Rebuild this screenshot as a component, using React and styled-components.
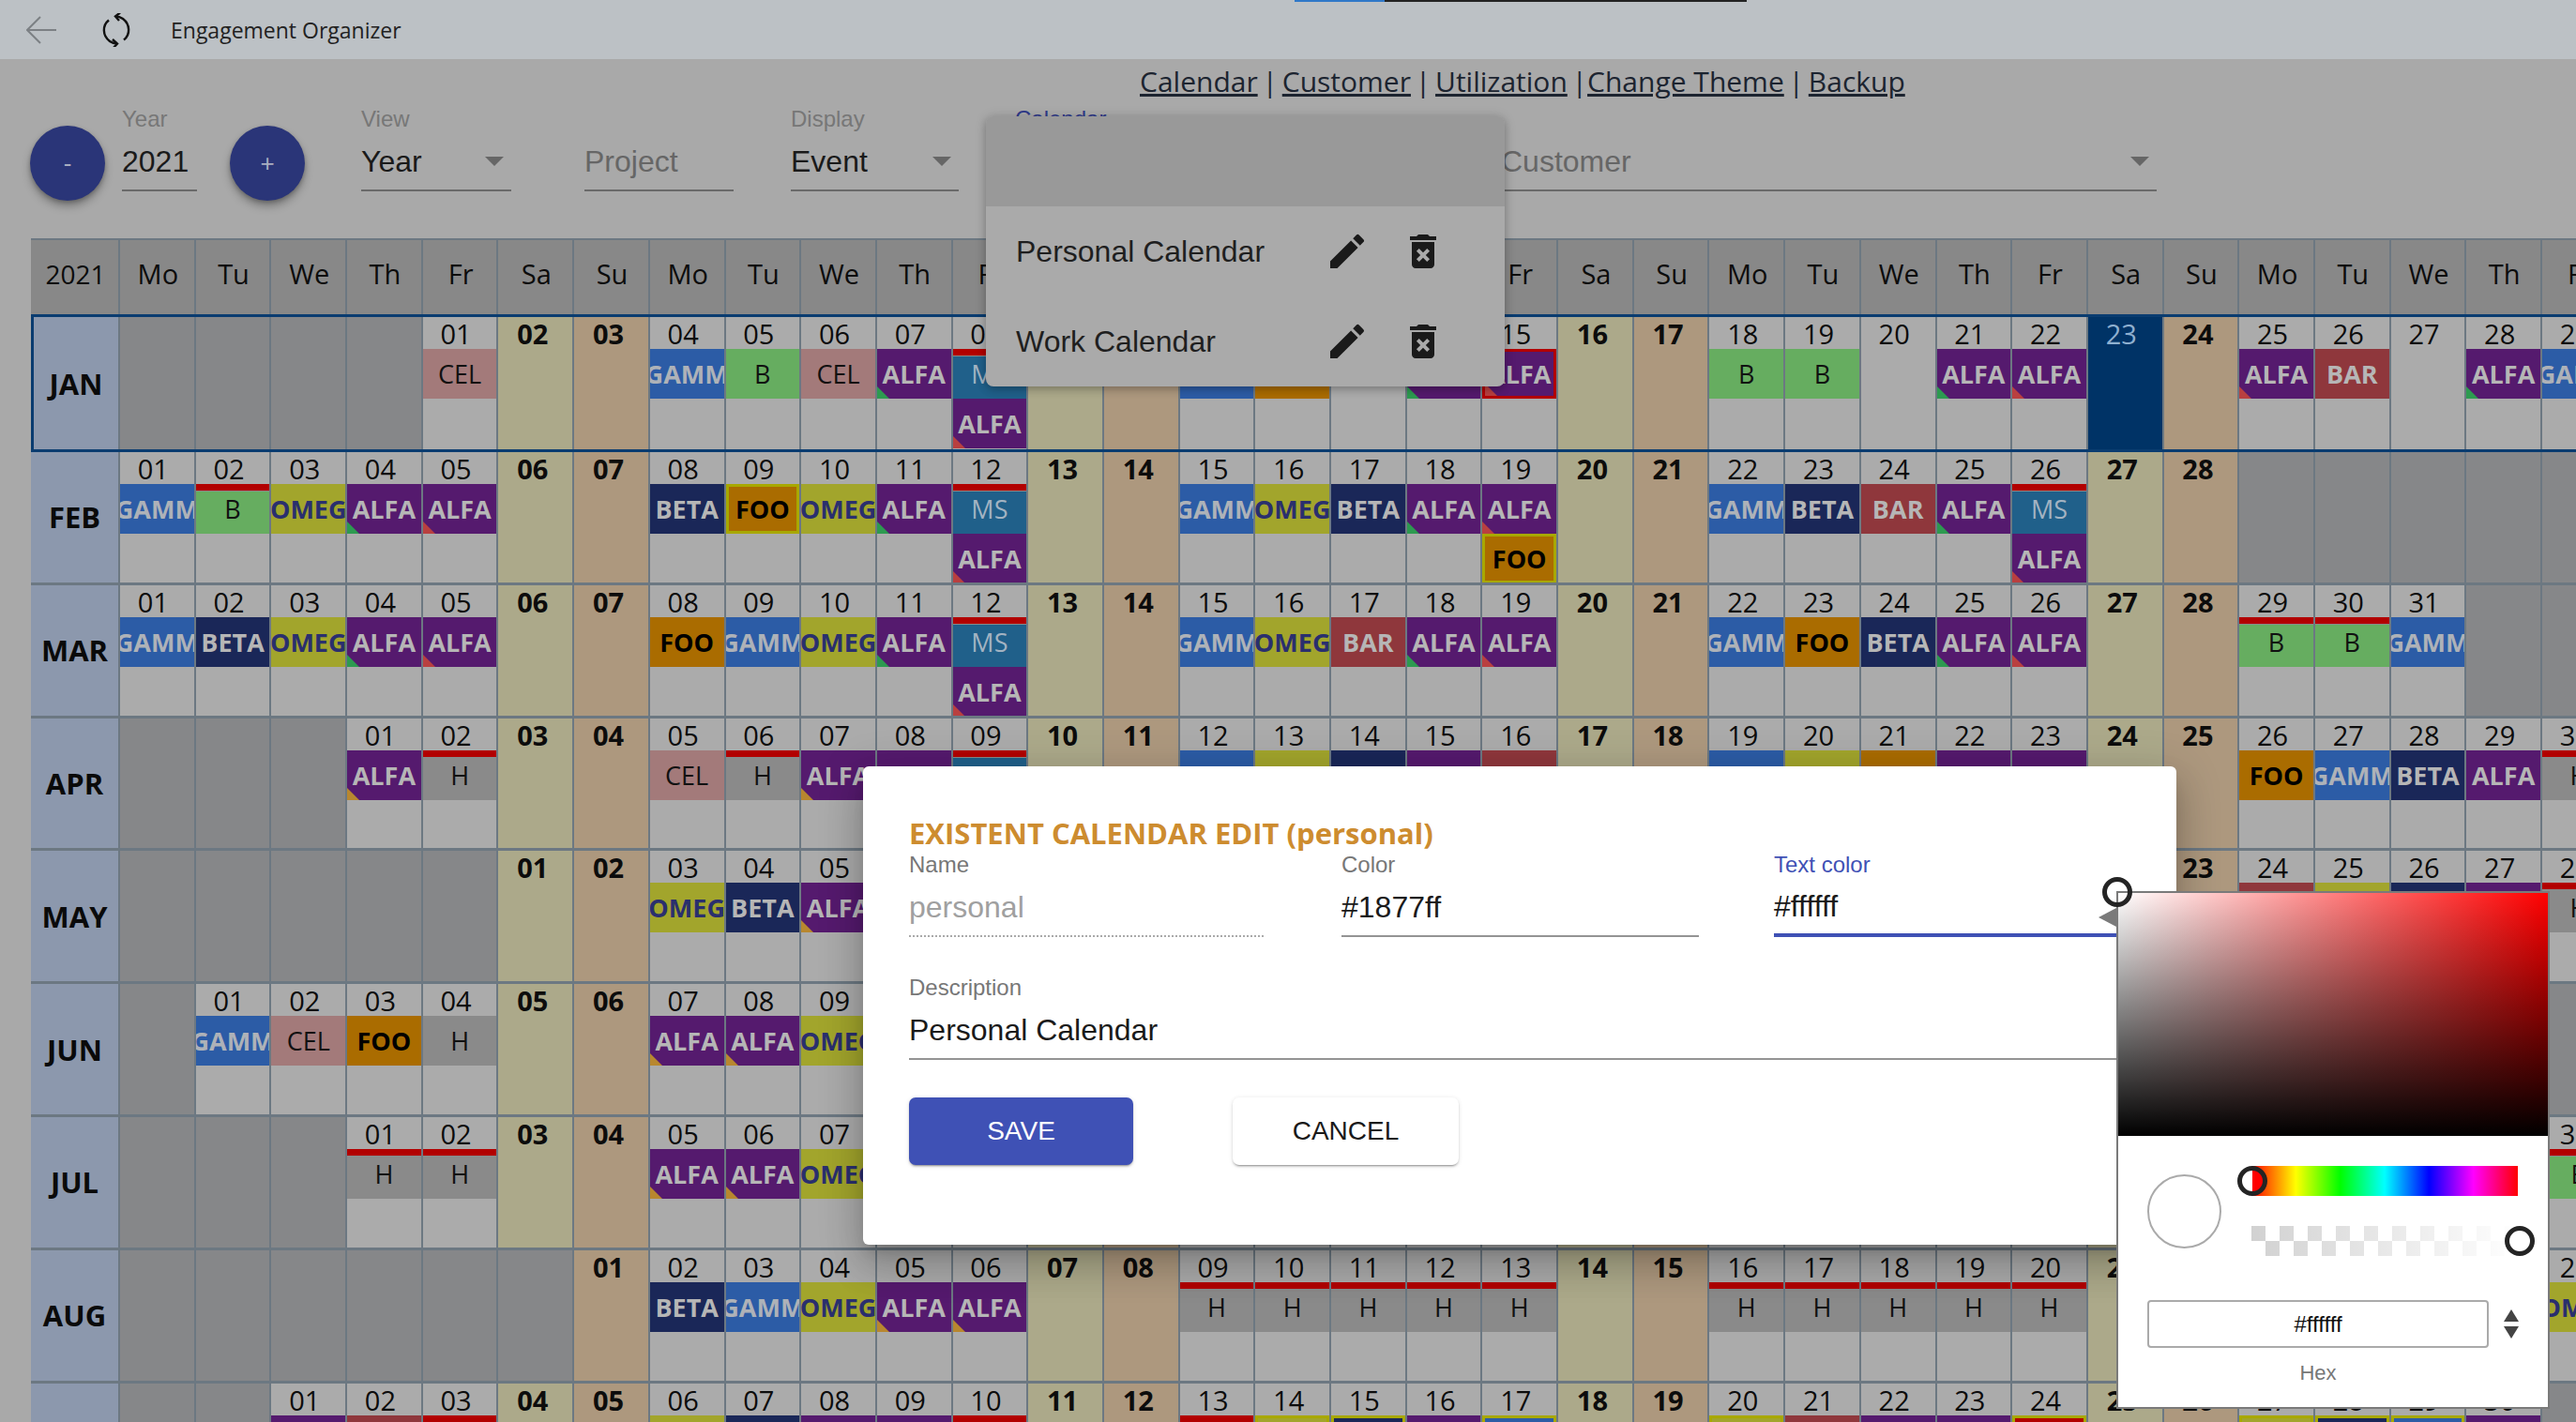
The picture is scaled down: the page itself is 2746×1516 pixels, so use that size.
import React from "react";
import styled, { createGlobalStyle } from "styled-components";
import { MdEdit, MdDeleteForever } from "react-icons/md";

const GlobalStyle = createGlobalStyle`
  html, body {
    margin: 0;
    padding: 0;
    overflow: hidden;
    background: #a9a9a9;
  }
  * {
    box-sizing: border-box;
  }
`;

const UI = `"Liberation Sans", Arial, sans-serif`;
const CAL = `"Open Sans", "Liberation Sans", sans-serif`;
const LINE = "#6c7882";

const Page = styled.div`
  position: relative;
  width: 2746px;
  height: 1516px;
  overflow: hidden;
  background: #a9a9a9;
  font-family: ${UI};
`;

const TitleBar = styled.header`
  position: relative;
  height: 63px;
  display: flex;
  align-items: center;
  padding-left: 28px;
  background: #bcc1c5;
`;

const Progress = styled.div`
  position: absolute;
  top: 0;
  left: 1380px;
  width: 482px;
  height: 2px;
  background: linear-gradient(to right, #2f78c8 96px, #222 96px);
`;

const AppName = styled.span`
  margin-left: 42px;
  font: 400 23px ${CAL};
  color: #222;
`;

const SyncIcon = styled.svg`
  margin-left: 48px;
`;

const Nav = styled.nav`
  height: 49px;
  padding: 0 0 2px 1215px;
  display: flex;
  align-items: center;
  font: 400 30px ${CAL};
  word-spacing: -3px;
  color: #1c2430;
  white-space: pre;
`;

const NavLink = styled.a`
  color: #1c2430;
  word-spacing: 0;
  text-decoration: underline;
`;

const Toolbar = styled.section`
  height: 142px;
  padding-left: 32px;
  display: flex;
  align-items: flex-start;
`;

const RoundButton = styled.button`
  width: 80px;
  height: 80px;
  margin-top: 22px;
  margin-left: ${(p) => p.$ml || 0}px;
  border: 0;
  border-radius: 50%;
  background: #2a3578;
  color: #a9adc0;
  font: 400 26px ${UI};
  box-shadow: 0 6px 10px rgba(0, 0, 0, 0.28), 0 2px 4px rgba(0, 0, 0, 0.2);
`;

const Field = styled.div`
  position: relative;
  flex: ${(p) => (p.$w ? "none" : "1")};
  width: ${(p) => (p.$w ? `${p.$w}px` : "auto")};
  margin-left: ${(p) => p.$ml || 0}px;

  ${(p) =>
    p.$arrow &&
    `&::after {
      content: "";
      position: absolute;
      right: 8px;
      top: 55px;
      border-left: 10px solid transparent;
      border-right: 10px solid transparent;
      border-top: 10px solid #666;
    }`}
`;

const Label = styled.label`
  display: block;
  height: 30px;
  font: 400 24px/30px ${UI};
  color: ${(p) => p.$color || "#777"};
`;

const Value = styled.div`
  height: 62px;
  display: flex;
  align-items: center;
  font: 400 32px ${UI};
  color: ${(p) => p.$color || "#1a1a1a"};
  border-bottom: ${(p) => p.$line || "2px solid #6a6a6a"};
`;

const Grid = styled.div`
  display: flex;
  flex-direction: column;
  width: max-content;
  margin-left: 33px;
`;

const Row = styled.div`
  display: grid;
  grid-template-columns: ${(p) => (p.$edge ? 92 : 95)}px repeat(37, 80.7px);
  height: ${(p) => p.$h}px;
  border-bottom: 3px solid ${(p) => p.$edge || LINE};
  border-top: ${(p) => (p.$edge ? `3px solid ${p.$edge}` : "0")};
  border-left: ${(p) => (p.$edge ? `3px solid ${p.$edge}` : "0")};
`;

const HeadRow = styled.div`
  display: grid;
  grid-template-columns: 95px repeat(37, 80.7px);
  height: 81px;
  border-top: 2px solid ${LINE};
`;

const HeadCell = styled.div`
  display: flex;
  align-items: center;
  justify-content: center;
  padding: 0 0 8px 2px;
  background: #888888;
  border-right: 2px solid ${LINE};
  font: 400 ${(p) => p.$size || 29}px ${CAL};
  color: #0c0c0c;
`;

const Month = styled.div`
  display: flex;
  align-items: center;
  justify-content: center;
  background: #8c98ad;
  border-right: 2px solid ${LINE};
  font: 700 31px ${CAL};
  color: #0a0a0a;
`;

const tints = {
  day: "#ababab",
  off: "#868789",
  sat: "#aca98a",
  sun: "#ad987e",
  today: "#003366",
};

const Cell = styled.div`
  min-width: 0;
  overflow: hidden;
  display: flex;
  flex-direction: column;
  background: ${(p) => tints[p.$kind]};
  border-right: 2px solid ${LINE};
`;

const DayNumber = styled.div`
  flex: none;
  height: 34px;
  padding-right: ${(p) => (p.$strong ? 6 : 8)}px;
  text-align: center;
  font: ${(p) => (p.$strong ? 700 : 400)} 29px/36px ${CAL};
  color: ${(p) => p.$color || "#0c0c0c"};
`;

const tones = {
  ALFA: { bg: "#551a6e", fg: "#b6b6b6", weight: 700 },
  GAMM: { bg: "#2c5ca6", fg: "#aeb2b8", weight: 700 },
  OMEG: { bg: "#a2a52c", fg: "#2a2f6e", weight: 700 },
  BETA: { bg: "#1a2758", fg: "#b6b6b6", weight: 700 },
  FOO: { bg: "#aa6c00", fg: "#000", weight: 700 },
  BAR: { bg: "#8f373c", fg: "#b6b6b6", weight: 700 },
  CEL: { bg: "#a37a7a", fg: "#111", weight: 400 },
  B: { bg: "#66ad60", fg: "#111", weight: 400 },
  H: { bg: "#8a8a8a", fg: "#111", weight: 400 },
  MS: { bg: "#20608a", fg: "#a3b3c2", weight: 400 },
};

const cornerColors = { g: "#2d9a50", r: "#b94040", o: "#b8872f" };

const EventBox = styled.div`
  position: relative;
  flex: none;
  height: 53px;
  overflow: hidden;
  display: flex;
  align-items: center;
  justify-content: center;
  background: ${(p) => tones[p.$name].bg};
  color: ${(p) => tones[p.$name].fg};
  font: ${(p) => tones[p.$name].weight} 27px ${CAL};
  white-space: nowrap;
  border: ${(p) => (p.$ring ? `3px solid ${p.$ring}` : "0")};

  ${(p) =>
    p.$flag &&
    `&::before {
      content: "";
      position: absolute;
      top: 0;
      left: 0;
      right: 0;
      height: 7px;
      background: #b20000;
      border-bottom: 1px solid #8a8a8a;
    }`}

  ${(p) =>
    p.$corner &&
    `&::after {
      content: "";
      position: absolute;
      left: 0;
      bottom: 0;
      border-right: 13px solid transparent;
      border-bottom: 13px solid ${cornerColors[p.$corner]};
    }`}
`;

// popup with the calendar list, sits under the dim like the rest of the page
const CalendarMenu = styled.div`
  position: absolute;
  left: 1051px;
  top: 124px;
  width: 553px;
  height: 288px;
  border-radius: 8px;
  overflow: hidden;
  background: #aaaaaa;
  box-shadow: 0 3px 8px rgba(0, 0, 0, 0.22), 0 1px 14px rgba(0, 0, 0, 0.12);
`;

const MenuHead = styled.div`
  height: 96px;
  background: #999999;
`;

const MenuItem = styled.div`
  height: 96px;
  padding: 0 63px 0 32px;
  display: flex;
  align-items: center;
  font: 400 32px ${UI};
  color: #1f1f1f;
`;

const MenuName = styled.span`
  flex: 1;
`;

const MenuIcons = styled.div`
  display: flex;
  align-items: center;
  gap: 33px;
  color: #1a1a1a;
  svg {
    display: block;
  }
`;

const Dialog = styled.div`
  position: absolute;
  left: 920px;
  top: 817px;
  width: 1400px;
  height: 510px;
  padding: 53px 50px 0 49px;
  background: #fff;
  border-radius: 6px;
  box-shadow: 0 11px 15px -7px rgba(0, 0, 0, 0.2), 0 24px 38px 3px rgba(0, 0, 0, 0.14),
    0 9px 46px 8px rgba(0, 0, 0, 0.12);
`;

const DialogTitle = styled.h2`
  margin: 0;
  height: 37px;
  font: 700 31px/36px ${CAL};
  color: #cd8c2f;
`;

const FieldRow = styled.div`
  display: grid;
  grid-template-columns: 461px 461px 1fr;
  margin-bottom: 39px;
`;

const Actions = styled.div`
  display: flex;
  gap: 106px;
  margin-top: 40px;
`;

const ActionButton = styled.button`
  width: ${(p) => p.$w}px;
  height: 72px;
  border: 0;
  border-radius: 7px;
  background: ${(p) => (p.$primary ? "#3f51b5" : "#fff")};
  color: ${(p) => (p.$primary ? "#fff" : "#1a1a1a")};
  font: 400 28px ${UI};
  box-shadow: 0 3px 1px -2px rgba(0, 0, 0, 0.2), 0 2px 2px 0 rgba(0, 0, 0, 0.14),
    0 1px 5px 0 rgba(0, 0, 0, 0.12);
`;

const Picker = styled.div`
  position: absolute;
  left: 2256px;
  top: 950px;
  width: 462px;
  height: 552px;
  background: #fff;
  border: 2px solid #7a7a7a;
`;

const Shade = styled.div`
  height: 259px;
  background: linear-gradient(to top, #000, rgba(0, 0, 0, 0)), linear-gradient(to right, #fff, #f00);
`;

const Ring = styled.span`
  position: absolute;
  left: ${(p) => p.$x}px;
  top: ${(p) => p.$y}px;
  width: 32px;
  height: 32px;
  border-radius: 50%;
  border: 5px solid #242424;
  background: ${(p) => p.$fill || "transparent"};
`;

const Pointer = styled.span`
  position: absolute;
  left: -21px;
  top: 16px;
  border-top: 10px solid transparent;
  border-bottom: 10px solid transparent;
  border-right: 19px solid #7a7a7a;
`;

const PickerBody = styled.div`
  padding: 32px 31px 0;
`;

const PickerTop = styled.div`
  display: flex;
  align-items: flex-start;
`;

const Swatch = styled.div`
  width: 79px;
  height: 79px;
  margin-top: 9px;
  border-radius: 50%;
  border: 2px solid #aaa;
  background: #fff;
`;

const Sliders = styled.div`
  margin-left: 32px;
  width: 284px;
  display: flex;
  flex-direction: column;
  gap: 32px;
`;

const HueBar = styled.div`
  height: 32px;
  background: linear-gradient(to right, #f00, #ff0, #0f0, #0ff, #00f, #f0f, #f00);
`;

const AlphaBar = styled.div`
  height: 32px;
  background: linear-gradient(to right, rgba(255, 255, 255, 0.1), #fff),
    repeating-conic-gradient(#fff 0 25%, #ccc 0 50%) 0 0 / 30px 32px;
`;

const HexRow = styled.div`
  display: flex;
  align-items: center;
  margin-top: 47px;
`;

const HexInput = styled.div`
  width: 364px;
  height: 51px;
  display: flex;
  align-items: center;
  justify-content: center;
  border: 2px solid #aaa;
  border-radius: 4px;
  font: 400 24px ${UI};
  color: #111;
`;

const Stepper = styled.div`
  margin-left: 16px;
  display: flex;
  flex-direction: column;
  gap: 5px;
`;

const StepArrow = styled.span`
  border-left: 8px solid transparent;
  border-right: 8px solid transparent;
  ${(p) => (p.$down ? "border-top" : "border-bottom")}: 13px solid #444;
`;

const HexLabel = styled.div`
  width: 364px;
  margin-top: 14px;
  text-align: center;
  font: 400 22px ${UI};
  color: #777;
`;

const DAY_NAMES = ["Mo", "Tu", "We", "Th", "Fr", "Sa", "Su"];

// ALFA:g = corner colour, !H = red flag on top, FOO# = yellow ring, ALFA:r@ = red ring
const ALFA_G = "ALFA:g";
const ALFA_R = "ALFA:r";
const ALFA_O = "ALFA:o";

const MONTHS = [
  {
    name: "JAN", start: 4, days: 31, events: {
      1: ["CEL"], 4: ["GAMM"], 5: ["B"], 6: ["CEL"], 7: [ALFA_G], 8: ["!MS", ALFA_R], 11: ["GAMM"], 12: ["FOO"],
      14: [ALFA_G], 15: ["ALFA:r@"], 18: ["B"], 19: ["B"], 21: [ALFA_G], 22: [ALFA_R], 25: [ALFA_R], 26: ["BAR"],
      28: [ALFA_G], 29: ["GAMM"],
    },
  },
  {
    name: "FEB", start: 0, days: 28, events: {
      1: ["GAMM"], 2: ["!B"], 3: ["OMEG"], 4: [ALFA_G], 5: [ALFA_R], 8: ["BETA"], 9: ["FOO#"], 10: ["OMEG"],
      11: [ALFA_G], 12: ["!MS", ALFA_R], 15: ["GAMM"], 16: ["OMEG"], 17: ["BETA"], 18: [ALFA_G], 19: [ALFA_R, "FOO#"],
      22: ["GAMM"], 23: ["BETA"], 24: ["BAR"], 25: [ALFA_G], 26: ["!MS", ALFA_R],
    },
  },
  {
    name: "MAR", start: 0, days: 31, events: {
      1: ["GAMM"], 2: ["BETA"], 3: ["OMEG"], 4: [ALFA_G], 5: [ALFA_R], 8: ["FOO"], 9: ["GAMM"], 10: ["OMEG"],
      11: [ALFA_G], 12: ["!MS", ALFA_R], 15: ["GAMM"], 16: ["OMEG"], 17: ["BAR"], 18: [ALFA_G], 19: [ALFA_R],
      22: ["GAMM"], 23: ["FOO"], 24: ["BETA"], 25: [ALFA_G], 26: [ALFA_R], 29: ["!B"], 30: ["!B"], 31: ["GAMM"],
    },
  },
  {
    name: "APR", start: 3, days: 30, events: {
      1: [ALFA_O], 2: ["!H"], 5: ["CEL"], 6: ["!H"], 7: [ALFA_O], 8: [ALFA_O], 9: ["!MS"], 12: ["GAMM"], 13: ["OMEG"],
      14: ["BETA"], 15: ["ALFA"], 16: ["BAR"], 19: ["GAMM"], 20: ["OMEG"], 21: ["FOO"], 22: ["ALFA"], 23: ["ALFA"],
      26: ["FOO"], 27: ["GAMM"], 28: ["BETA"], 29: ["ALFA"], 30: ["!H"],
    },
  },
  {
    name: "MAY", start: 5, days: 31, events: {
      3: ["OMEG"], 4: ["BETA"], 5: [ALFA_O], 24: ["BAR"], 25: ["OMEG"], 26: ["BETA"], 27: ["ALFA"], 28: ["!H"],
    },
  },
  {
    name: "JUN", start: 1, days: 30, events: {
      1: ["GAMM"], 2: ["CEL"], 3: ["FOO"], 4: ["H"], 7: [ALFA_O], 8: [ALFA_O], 9: ["OMEG"],
    },
  },
  {
    name: "JUL", start: 3, days: 31, events: {
      1: ["!H"], 2: ["!H"], 5: [ALFA_O], 6: [ALFA_O], 7: ["OMEG"], 30: ["!B"],
    },
  },
  {
    name: "AUG", start: 6, days: 31, events: {
      2: ["BETA"], 3: ["GAMM"], 4: ["OMEG"], 5: [ALFA_O], 6: [ALFA_O], 9: ["!H"], 10: ["!H"], 11: ["!H"], 12: ["!H"],
      13: ["!H"], 16: ["!H"], 17: ["!H"], 18: ["!H"], 19: ["!H"], 20: ["!H"], 27: ["OMEG"],
    },
  },
  {
    name: "SEP", start: 2, days: 30, events: {
      1: ["ALFA"], 2: ["BAR"], 3: ["!H"], 6: ["OMEG"], 7: ["BETA"], 8: ["ALFA"], 9: ["ALFA"], 10: ["!H"], 13: ["!H"],
      14: ["OMEG#"], 15: ["BETA#"], 16: ["ALFA"], 17: ["GAMM#"], 20: ["OMEG#"], 21: ["BAR"], 22: ["ALFA"], 23: ["ALFA"],
      24: ["!BAR#"], 27: ["OMEG#"], 28: ["BETA#"], 29: ["GAMM#"], 30: ["ALFA"],
    },
  },
];

function CalendarEvent({ code }) {
  const flag = code.startsWith("!");
  const ring = code.endsWith("#") ? "#a8a800" : code.endsWith("@") ? "#b20000" : null;
  const [name, corner] = code.replace(/[!#@]/g, "").split(":");
  return (
    <EventBox $name={name} $flag={flag} $ring={ring} $corner={corner}>
      {name}
    </EventBox>
  );
}

function MonthRow({ month, height, edge }) {
  const cols = [];
  for (let i = 0; i < 37; i++) {
    const day = i - month.start + 1;
    const inMonth = day >= 1 && day <= month.days;
    const weekend = i % 7 >= 5;
    const isToday = month.name === "JAN" && day === 23;
    let kind = "off";
    if (inMonth) kind = isToday ? "today" : i % 7 === 5 ? "sat" : i % 7 === 6 ? "sun" : "day";
    cols.push(
      <Cell key={i} $kind={kind}>
        {inMonth && (
          <DayNumber $strong={weekend && !isToday} $color={isToday ? "#8fb0d0" : undefined}>
            {String(day).padStart(2, "0")}
          </DayNumber>
        )}
        {inMonth && (month.events[day] || []).map((code, n) => <CalendarEvent key={n} code={code} />)}
      </Cell>
    );
  }
  return (
    <Row $h={height} $edge={edge}>
      <Month>{month.name}</Month>
      {cols}
    </Row>
  );
}

export default function App() {
  const heads = [];
  for (let i = 0; i < 37; i++) heads.push(DAY_NAMES[i % 7]);

  return (
    <Page>
      <GlobalStyle />
      <TitleBar>
        <Progress />
        <svg width="32" height="30" viewBox="0 0 32 30" fill="none" stroke="#7c8084" strokeWidth="2">
          <path d="M32 15H1M15 1L1 15l14 14" />
        </svg>
        <SyncIcon width="32" height="36" viewBox="0 0 32 36" fill="none" stroke="#111" strokeWidth="2.4">
          <path d="M8 7.5C1 13 1 24 9 30c2.5 1.8 5 2.5 8 2.5" />
          <path d="M24 28.5C31 23 31 12 23 6c-2.5-1.8-5-2.5-8-2.5" />
          <path d="M20 -0.5L15 3.5l4 4.5" />
          <path d="M12 28l5 4.5-4 4.5" />
        </SyncIcon>
        <AppName>Engagement Organizer</AppName>
      </TitleBar>

      <Nav>
        <NavLink>Calendar</NavLink> | <NavLink>Customer</NavLink> | <NavLink>Utilization</NavLink> |
        <NavLink>Change Theme</NavLink> | <NavLink>Backup</NavLink>
      </Nav>

      <Toolbar>
        <RoundButton>-</RoundButton>
        <Field $w={80} $ml={18}>
          <Label>Year</Label>
          <Value>2021</Value>
        </Field>
        <RoundButton $ml={35}>+</RoundButton>
        <Field $w={160} $ml={60} $arrow>
          <Label>View</Label>
          <Value>Year</Value>
        </Field>
        <Field $w={159} $ml={78}>
          <Label />
          <Value $color="#666">Project</Value>
        </Field>
        <Field $w={179} $ml={61} $arrow>
          <Label>Display</Label>
          <Value>Event</Value>
        </Field>
        <Field $w={460} $ml={60}>
          <Label $color="#2f3a8a">Calendar</Label>
          <Value />
        </Field>
        <Field $w={699} $ml={58} $arrow>
          <Label />
          <Value $color="#666">Customer</Value>
        </Field>
      </Toolbar>

      <Grid>
        <HeadRow>
          <HeadCell $size={28}>2021</HeadCell>
          {heads.map((d, i) => (
            <HeadCell key={i}>{d}</HeadCell>
          ))}
        </HeadRow>
        {MONTHS.map((m, i) => (
          <MonthRow key={m.name} month={m} height={i === 0 ? 147 : 141.8} edge={i === 0 ? "#0a3c70" : undefined} />
        ))}
      </Grid>

      <CalendarMenu>
        <MenuHead />
        {["Personal Calendar", "Work Calendar"].map((name) => (
          <MenuItem key={name}>
            <MenuName>{name}</MenuName>
            <MenuIcons>
              <MdEdit size={48} />
              <MdDeleteForever size={48} />
            </MenuIcons>
          </MenuItem>
        ))}
      </CalendarMenu>

      <Dialog>
        <DialogTitle>EXISTENT CALENDAR EDIT (personal)</DialogTitle>
        <FieldRow>
          <Field $w={378}>
            <Label>Name</Label>
            <Value $color="#a0a0a0" $line="2px dotted #aaa">personal</Value>
          </Field>
          <Field $w={381}>
            <Label>Color</Label>
            <Value $line="2px solid #949494">#1877ff</Value>
          </Field>
          <Field>
            <Label $color="#3f51b5">Text color</Label>
            <Value $line="4px solid #3f51b5">#ffffff</Value>
          </Field>
        </FieldRow>
        <Field>
          <Label>Description</Label>
          <Value $line="2px solid #949494">Personal Calendar</Value>
        </Field>
        <Actions>
          <ActionButton $primary $w={239}>SAVE</ActionButton>
          <ActionButton $w={241}>CANCEL</ActionButton>
        </Actions>
      </Dialog>

      <Picker>
        <Pointer />
        <Ring $x={-17} $y={-17} />
        <Shade />
        <PickerBody>
          <PickerTop>
            <Swatch />
            <Sliders>
              <HueBar />
              <AlphaBar />
            </Sliders>
          </PickerTop>
          <HexRow>
            <HexInput>#ffffff</HexInput>
            <Stepper>
              <StepArrow />
              <StepArrow $down />
            </Stepper>
          </HexRow>
          <HexLabel>Hex</HexLabel>
        </PickerBody>
        <Ring $x={127} $y={291} $fill="linear-gradient(to right, #fff 50%, #f00 50%)" />
        <Ring $x={412} $y={355} $fill="#fff" />
      </Picker>
    </Page>
  );
}
